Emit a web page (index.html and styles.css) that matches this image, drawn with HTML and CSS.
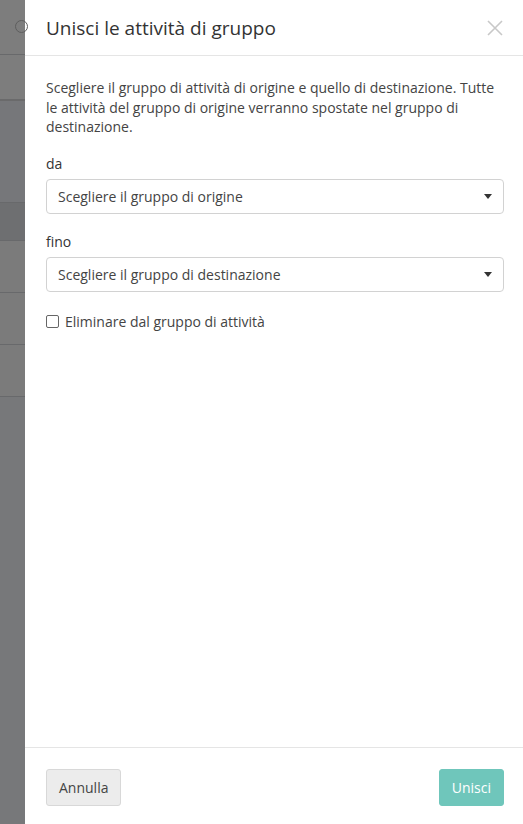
FILE: index.html
```html
<!DOCTYPE html>
<html lang="it">
<head>
<meta charset="utf-8">
<title>Unisci le attività di gruppo</title>
<link rel="stylesheet" href="styles.css">
</head>
<body>
<div class="screen">
  <div class="backdrop">
    <div class="bg-row bg-top"><span class="bg-circle"></span></div>
    <div class="bg-row bg-r2"></div>
    <div class="bg-row bg-r3"></div>
    <div class="bg-row bg-r4"></div>
    <div class="bg-row bg-r5"></div>
    <div class="bg-row bg-r5"></div>
    <div class="bg-row bg-r5"></div>
    <div class="bg-rest"></div>
  </div>
  <div class="panel">
    <div class="panel-header">
      <h1 class="title">Unisci le attività di gruppo</h1>
      <button class="close" aria-label="Chiudi">
        <svg width="16" height="16" viewBox="0 0 16 16"><path d="M1 1L15 15M15 1L1 15" stroke="#c8c8c8" stroke-width="1.6" fill="none"/></svg>
      </button>
    </div>
    <div class="panel-body">
      <p class="intro">Scegliere il gruppo di attività di origine e quello di destinazione. Tutte le attività del gruppo di origine verranno spostate nel gruppo di destinazione.</p>
      <label class="field-label">da</label>
      <div class="select"><span>Scegliere il gruppo di origine</span><span class="caret"></span></div>
      <label class="field-label">fino</label>
      <div class="select"><span>Scegliere il gruppo di destinazione</span><span class="caret"></span></div>
      <label class="check-row"><span class="checkbox"></span>Eliminare dal gruppo di attività</label>
    </div>
    <div class="panel-footer">
      <button class="btn btn-default">Annulla</button>
      <button class="btn btn-primary">Unisci</button>
    </div>
  </div>
</div>
</body>
</html>
```
FILE: styles.css
```css
* { box-sizing: border-box; }
html, body { margin: 0; padding: 0; }
body {
  font-family: "Open Sans", "Liberation Sans", sans-serif;
  color: #333;
  width: 523px;
  height: 824px;
  overflow: hidden;
}
.screen {
  display: flex;
  width: 523px;
  height: 824px;
}
.backdrop {
  width: 25px;
  flex: none;
  display: flex;
  flex-direction: column;
  background: #77787a;
}
.bg-row { border-bottom: 1px solid #68696b; flex: none; }
.bg-top {
  height: 55px;
  background: #7d7d7d;
  position: relative;
}
.bg-circle {
  position: absolute;
  left: 15px;
  top: 20px;
  width: 13px;
  height: 13px;
  border: 1.5px solid #5e5e5e;
  border-radius: 50%;
}
.bg-r2 { height: 46px; background: #7d7d7d; border-bottom: 2px solid #6a6a6b; }
.bg-r3 { height: 102px; background: #76777a; }
.bg-r4 { height: 38px; background: #6e6f71; }
.bg-r5 { height: 52px; background: #7b7b7b; }
.bg-rest { flex: 1; background: #77787a; }

.panel {
  flex: 1;
  background: #fff;
  display: flex;
  flex-direction: column;
}
.panel-header {
  height: 56px;
  flex: none;
  border-bottom: 1px solid #e5e5e5;
  display: flex;
  align-items: center;
  justify-content: space-between;
  padding: 0 20px 0 21px;
}
.title {
  margin: 0;
  font-size: 19px;
  font-weight: 400;
  color: #333;
}
.close {
  border: 0;
  background: none;
  padding: 0;
  width: 16px;
  height: 16px;
  display: flex;
}
.panel-body {
  flex: 1;
  padding: 22px 19px 0 21px;
  display: flex;
  flex-direction: column;
}
.intro {
  margin: 0 0 17px;
  font-size: 14px;
  line-height: 19.6px;
  color: #444;
}
.field-label {
  font-size: 14px;
  line-height: 20px;
  color: #333;
  margin-bottom: 5px;
}
.select {
  height: 35px;
  border: 1px solid #d2d2d2;
  border-radius: 4px;
  display: flex;
  align-items: center;
  justify-content: space-between;
  padding: 0 11px 0 11px;
  font-size: 14px;
  color: #444;
  margin-bottom: 18px;
}
.caret {
  width: 0;
  height: 0;
  border-left: 4.5px solid transparent;
  border-right: 4.5px solid transparent;
  border-top: 5px solid #333;
}
.check-row {
  display: flex;
  align-items: center;
  font-size: 14px;
  line-height: 20px;
  color: #444;
  margin-top: 2px;
}
.checkbox {
  width: 13px;
  height: 13px;
  border: 1px solid #666;
  border-radius: 2px;
  margin-right: 6px;
  background: #fff;
}
.panel-footer {
  flex: none;
  border-top: 1px solid #e5e5e5;
  padding: 21px 19px 18px 21px;
  display: flex;
  justify-content: space-between;
}
.btn {
  height: 37px;
  border-radius: 3px;
  font-family: "Open Sans", "Liberation Sans", sans-serif;
  font-size: 14px;
  padding: 0 12px;
}
.btn-default {
  background: #ececec;
  border: 1px solid #d8d8d8;
  color: #444;
}
.btn-primary {
  background: #6fc6bb;
  border: 1px solid #6fc6bb;
  color: #fff;
}
```
